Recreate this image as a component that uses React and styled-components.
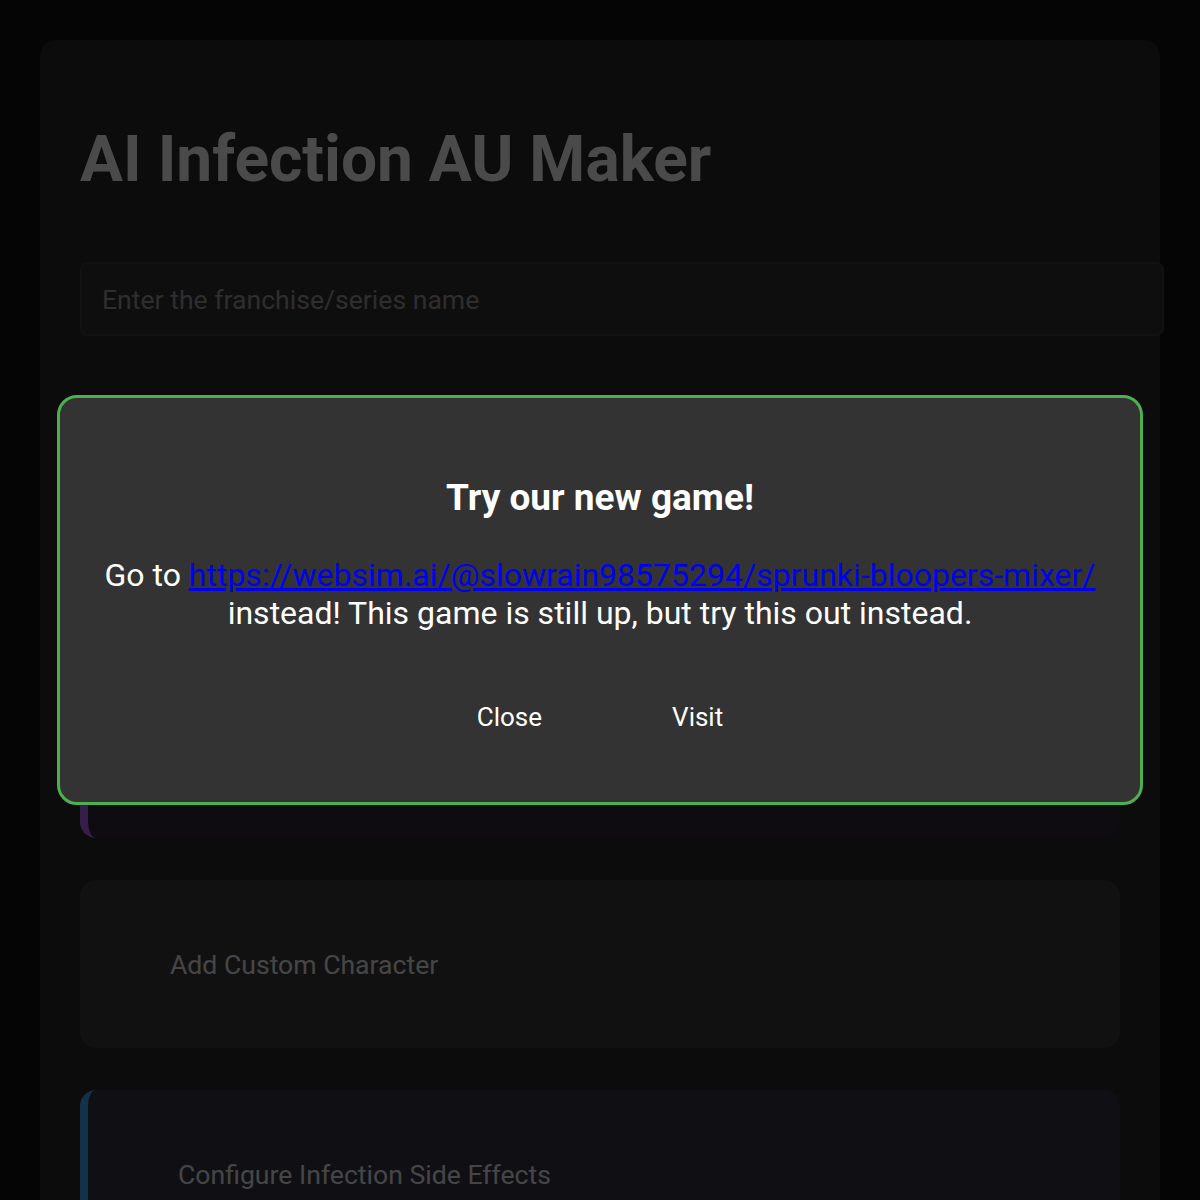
import React from 'react'
import styled, { createGlobalStyle } from 'styled-components'

const GlobalStyle = createGlobalStyle`
  body {
    margin: 0;
    padding: 40px;
    background: #111111;
    font-family: Roboto, "Liberation Sans", sans-serif;
    color: #f5f5f5;
  }
`

const Container = styled.div`
  background: #282828;
  border-radius: 16px;
  padding: 40px;
  min-height: 1200px;
`

const Title = styled.h1`
  font-size: 64px;
  font-weight: 700;
  margin: 42px 0 65px;
  color: #f7f7f7;
`

const SeriesInput = styled.input`
  display: block;
  width: 100%;
  padding: 19.5px 20px;
  font-size: 26.6px;
  font-family: inherit;
  background: #303030;
  border: 2px solid #3c3c3c;
  border-radius: 8px;
  color: #fff;
  margin-bottom: 82px;

  &::placeholder {
    color: #999999;
  }
`

const Section = styled.section`
  display: flex;
  align-items: center;
  min-height: ${(p) => p.$height || 168}px;
  padding: 0 90px;
  margin-bottom: 42px;
  border-radius: 16px;
  background: ${(p) => p.$bg || '#393939'};
  border-left: ${(p) => (p.$accent ? `8px solid ${p.$accent}` : 'none')};
  box-sizing: border-box;
`

const SectionTitle = styled.h3`
  margin: 0;
  font-size: 26.6px;
  font-weight: 400;
  color: #e8e8e8;
`

const Overlay = styled.div`
  position: fixed;
  inset: 0;
  background: rgba(0, 0, 0, 0.7);
`

const Modal = styled.div`
  position: fixed;
  top: 50%;
  left: 50%;
  transform: translate(-50%, -50%);
  width: 1086px;
  max-width: 92%;
  padding: 40px 20px 56px;
  box-sizing: border-box;
  background: #333333;
  border: 3px solid #4caf50;
  border-radius: 20px;
  text-align: center;
  color: #ffffff;
`

const ModalTitle = styled.h2`
  font-size: 37px;
  font-weight: 700;
  margin: 38px 0 37px;
`

const ModalText = styled.p`
  font-size: 32px;
  margin: 0 0 56px;

  a {
    color: #0000ee;
  }
`

const Buttons = styled.div`
  display: flex;
  justify-content: center;
  gap: 74px;
`

const Button = styled.button`
  background: transparent;
  border: none;
  color: #ffffff;
  font-family: inherit;
  font-size: 26px;
  padding: 14px 28px;
  cursor: pointer;
`

const App = () => {
  return (
    <>
      <GlobalStyle />
      <Container>
        <Title>AI Infection AU Maker</Title>
        <SeriesInput placeholder="Enter the franchise/series name" />
        <Section $height={420} $accent="#b266ff" $bg="#2f2838">
          <SectionTitle>Select Characters</SectionTitle>
        </Section>
        <Section>
          <SectionTitle>Add Custom Character</SectionTitle>
        </Section>
        <Section $accent="#3fa9f5" $bg="#323243">
          <SectionTitle>Configure Infection Side Effects</SectionTitle>
        </Section>
      </Container>
      <Overlay />
      <Modal>
        <ModalTitle>Try our new game!</ModalTitle>
        <ModalText>
          Go to{' '}
          <a href="https://websim.ai/@slowrain98575294/sprunki-bloopers-mixer/">
            https://websim.ai/@slowrain98575294/sprunki-bloopers-mixer/
          </a>{' '}
          instead! This game is still up, but try this out instead.
        </ModalText>
        <Buttons>
          <Button>Close</Button>
          <Button>Visit</Button>
        </Buttons>
      </Modal>
    </>
  )
}

export default App
